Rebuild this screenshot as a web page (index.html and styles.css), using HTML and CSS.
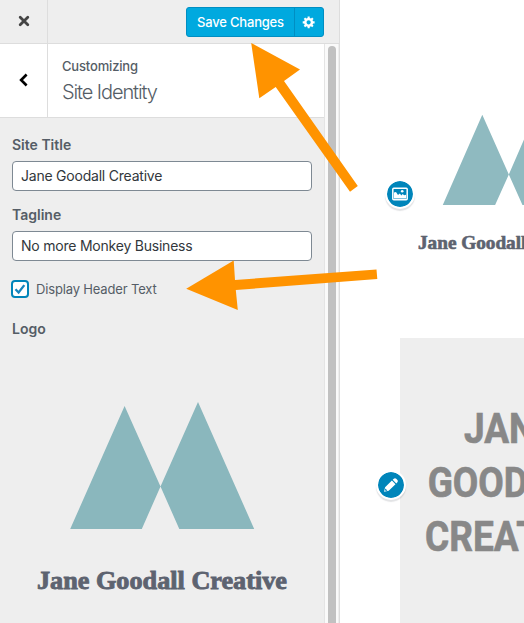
FILE: index.html
```html
<!DOCTYPE html>
<html lang="en">
<head>
<meta charset="utf-8">
<title>Customize: Site Identity</title>
<link rel="stylesheet" href="styles.css">
</head>
<body>
<div class="app">
  <aside class="sidebar">
    <header class="topbar">
      <button class="close" aria-label="Close"><svg width="12" height="12" viewBox="0 0 12 12"><path d="M2.2 2.2l7.6 7.6M9.8 2.2L2.2 9.8" stroke="#444" stroke-width="2.8" stroke-linecap="round"/></svg></button>
      <div class="actions">
        <button class="save">Save Changes</button>
        <button class="gear" aria-label="Settings"><svg width="14" height="14" viewBox="0 0 20 20"><path fill="#fff" d="M18 12h-2.18c-.17.7-.44 1.35-.81 1.93l1.54 1.54-2.1 2.1-1.54-1.54c-.58.36-1.23.63-1.91.79V19H8v-2.18c-.68-.16-1.33-.43-1.91-.79l-1.54 1.54-2.12-2.12 1.54-1.54c-.36-.58-.63-1.23-.79-1.91H1V9.03h2.17c.16-.7.44-1.35.8-1.94L2.43 5.55l2.1-2.1 1.54 1.54c.58-.37 1.24-.64 1.93-.81V2h3v2.18c.68.16 1.33.43 1.91.79l1.54-1.54 2.12 2.12-1.54 1.54c.36.59.64 1.24.8 1.94H18V12zm-8.5 1.5c1.66 0 3-1.34 3-3s-1.34-3-3-3-3 1.34-3 3 1.34 3 3 3z"/></svg></button>
      </div>
    </header>
    <div class="pane">
      <div class="content">
        <div class="section-head">
          <button class="back" aria-label="Back"><svg width="12" height="16" viewBox="0 0 12 16"><path d="M8.6 2.5L3.1 8L8.6 13.5" fill="none" stroke="#000" stroke-width="2.6"/></svg></button>
          <div class="titles"><span class="crumb">Customizing</span><h1>Site Identity</h1></div>
        </div>
        <form class="controls">
          <label class="label" for="title">Site Title</label>
          <input id="title" class="field" type="text" value="Jane Goodall Creative">
          <label class="label" for="tagline">Tagline</label>
          <input id="tagline" class="field" type="text" value="No more Monkey Business">
          <div class="check">
            <span class="box"><svg width="14" height="14" viewBox="0 0 14 14"><path d="M2.5 7.2l3.1 3.3 5.7-7.4" fill="none" stroke="#1785bd" stroke-width="2.3"/></svg></span>
            <span>Display Header Text</span>
          </div>
          <div class="label logo-label">Logo</div>
          <svg class="logo" width="300" height="206" viewBox="0 0 300 206">
            <path fill="#8ab7bd" d="M112.6 14L148.5 94.5L129.8 137H58.2zM186 10L242.2 137H167.3L148.5 94.5z"/>
            <text class="brand" x="25" y="197" textLength="250" lengthAdjust="spacingAndGlyphs">Jane Goodall Creative</text>
          </svg>
        </form>
      </div>
      <div class="scroll"><div class="thumb"></div></div>
    </div>
  </aside>
  <main class="preview">
    <div class="site-logo">
      <svg width="184" height="150" viewBox="0 0 251 204.6">
        <path fill="#8fbac0" d="M87.7 12L123.9 93.4L105.2 135H33.8zM161 8L217.3 135H142.5L123.9 93.4z"/>
        <text class="brand" x="0" y="195" textLength="250" lengthAdjust="spacingAndGlyphs">Jane Goodall Creative</text>
      </svg>
    </div>
    <section class="hero"><h2><span>JANE</span><span>GOODALL</span><span>CREATIVE</span></h2></section>
    <button class="badge badge-logo" aria-label="Edit logo"><svg width="16" height="14" viewBox="0 0 16 14"><rect x=".8" y="1.3" width="14.4" height="11.4" rx="1" fill="none" stroke="#fff" stroke-width="1.5"/><path fill="#fff" d="M2 11.6V5.6L4 5l2 3 1.8-1.6 1.6 2.1 1.2-1.4 1.6 1.2 1.8-.5v3.8z"/><circle cx="10.2" cy="4.3" r="1.3" fill="#fff"/></svg></button>
    <button class="badge badge-text" aria-label="Edit text"><svg width="16" height="16" viewBox="0 0 16 16"><path fill="#fff" d="M1.1 14.8l1-4.6L8.9 3.6l3.6 3.6-6.8 6.6zM9.7 2.8l1.1-1.1q1.3-1 2.4.1l1.2 1.2q1 1.1 0 2.2l-1.1 1.2z"/><path fill="#0085ba" d="M2.3 11.5l2.1 2.1-1.5.4-.9-.9z"/></svg></button>
  </main>
  <svg class="arrows" width="524" height="623" viewBox="0 0 524 623" fill="#ff9300">
    <path d="M251.2 43L300 69.6L284 81L357.8 186L350 191.8L275.7 87L259.3 98.2z"/>
    <path d="M186.2 288.7L233.7 260.5L235 280L376.5 269.5L377.3 279L235.8 290L237.8 310z"/>
  </svg>
</div>
</body>
</html>
```
FILE: styles.css
```css
* { box-sizing: border-box; }
body { margin: 0; font-family: Inter, "Liberation Sans", sans-serif; color: #555d66; overflow: hidden; }
button { border: 0; padding: 0; background: none; font: inherit; }
svg { display: block; }
.app { position: relative; display: flex; width: 524px; height: 623px; overflow: hidden; background: #fff; }

.sidebar { width: 340px; flex: none; display: flex; flex-direction: column; background: #eee; border-right: 1px solid #ddd; }
.topbar { height: 44px; flex: none; display: flex; justify-content: space-between; border-bottom: 1px solid #ddd; }
.close, .back { width: 48px; flex: none; display: grid; place-items: center; border-right: 1px solid #ddd; }
.close { padding-bottom: 1px; }
.back { padding-bottom: 2px; }
.actions { display: flex; height: 30px; margin: 7px 15px 0 0; border: 1px solid #008ec2; border-radius: 3px; overflow: hidden; background: #00a9df; }
.save { width: 107px; font-size: 13px; font-weight: 500; letter-spacing: -.2px; white-space: nowrap; color: #fff; }
.gear { width: 29px; display: grid; place-items: center; border-left: 1px solid #008ec2; }

.pane { flex: 1; min-height: 0; display: flex; }
.content { width: 324px; flex: none; overflow: hidden; }
.scroll { flex: 1; background: #fafafa; border-left: 1px solid #e4e4e4; border-right: 1px solid #eee; padding: 2px 0 0 3px; }
.thumb { width: 8px; height: 577px; border-radius: 4px 4px 0 0; background: #c1c1c1; }

.section-head { height: 74px; display: flex; background: #fff; border-bottom: 1px solid #ddd; }
.titles { padding: 14px 0 0 14px; }
.crumb { display: block; font-size: 13px; font-weight: 500; line-height: 17px; letter-spacing: -.17px; }
h1 { margin: 4px 0 0; font-size: 20px; font-weight: 300; line-height: 26px; letter-spacing: -1.1px; white-space: nowrap; }

.controls { padding: 17px 12px 0; display: flex; flex-direction: column; }
.label { font-size: 14px; font-weight: 600; line-height: 20px; margin-bottom: 6px; }
.field { width: 300px; height: 30px; margin: 0 0 14px; padding: 0 8px 1px; border: 1px solid #7e8993; border-radius: 4px; background: #fff; color: #32373c; font: 14px Inter, sans-serif; letter-spacing: -.22px; }
.check { display: flex; align-items: center; gap: 7px; height: 20px; margin: 4px 0 20px -1px; font-size: 13px; letter-spacing: -.16px; }
.box { width: 18px; height: 18px; border: 2px solid #0085ba; border-radius: 4px; background: #fff; }
.logo-label { margin: 0 0 53px; }
.brand { font: 700 26px "Liberation Serif", serif; fill: #5d6370; stroke: #5d6370; stroke-width: .9px; }

.preview { position: relative; flex: 1; min-width: 0; overflow: hidden; }
.site-logo { padding: 106px 0 0 78px; height: 338px; }
.hero { width: 218px; height: 285px; margin-left: 60px; padding-top: 63px; background: #eee; }
h2 { margin: 0 0 0 2px; font: 700 43px/54px Roboto, sans-serif; color: #888; -webkit-text-stroke: .7px #888; display: flex; flex-direction: column; align-items: center; transform: scaleX(.86); }
.badge { position: absolute; width: 30px; height: 30px; border: 2px solid #fff; border-radius: 50%; background: #0085ba; background-clip: padding-box; display: grid; place-items: center; box-shadow: 0 2px 1px rgba(60, 70, 80, .15), inset 0 0 0 0 #fff; }
.badge-logo { left: 45px; top: 179px; }
.badge-text { left: 36px; top: 470px; }
.arrows { position: absolute; inset: 0; pointer-events: none; }
```
